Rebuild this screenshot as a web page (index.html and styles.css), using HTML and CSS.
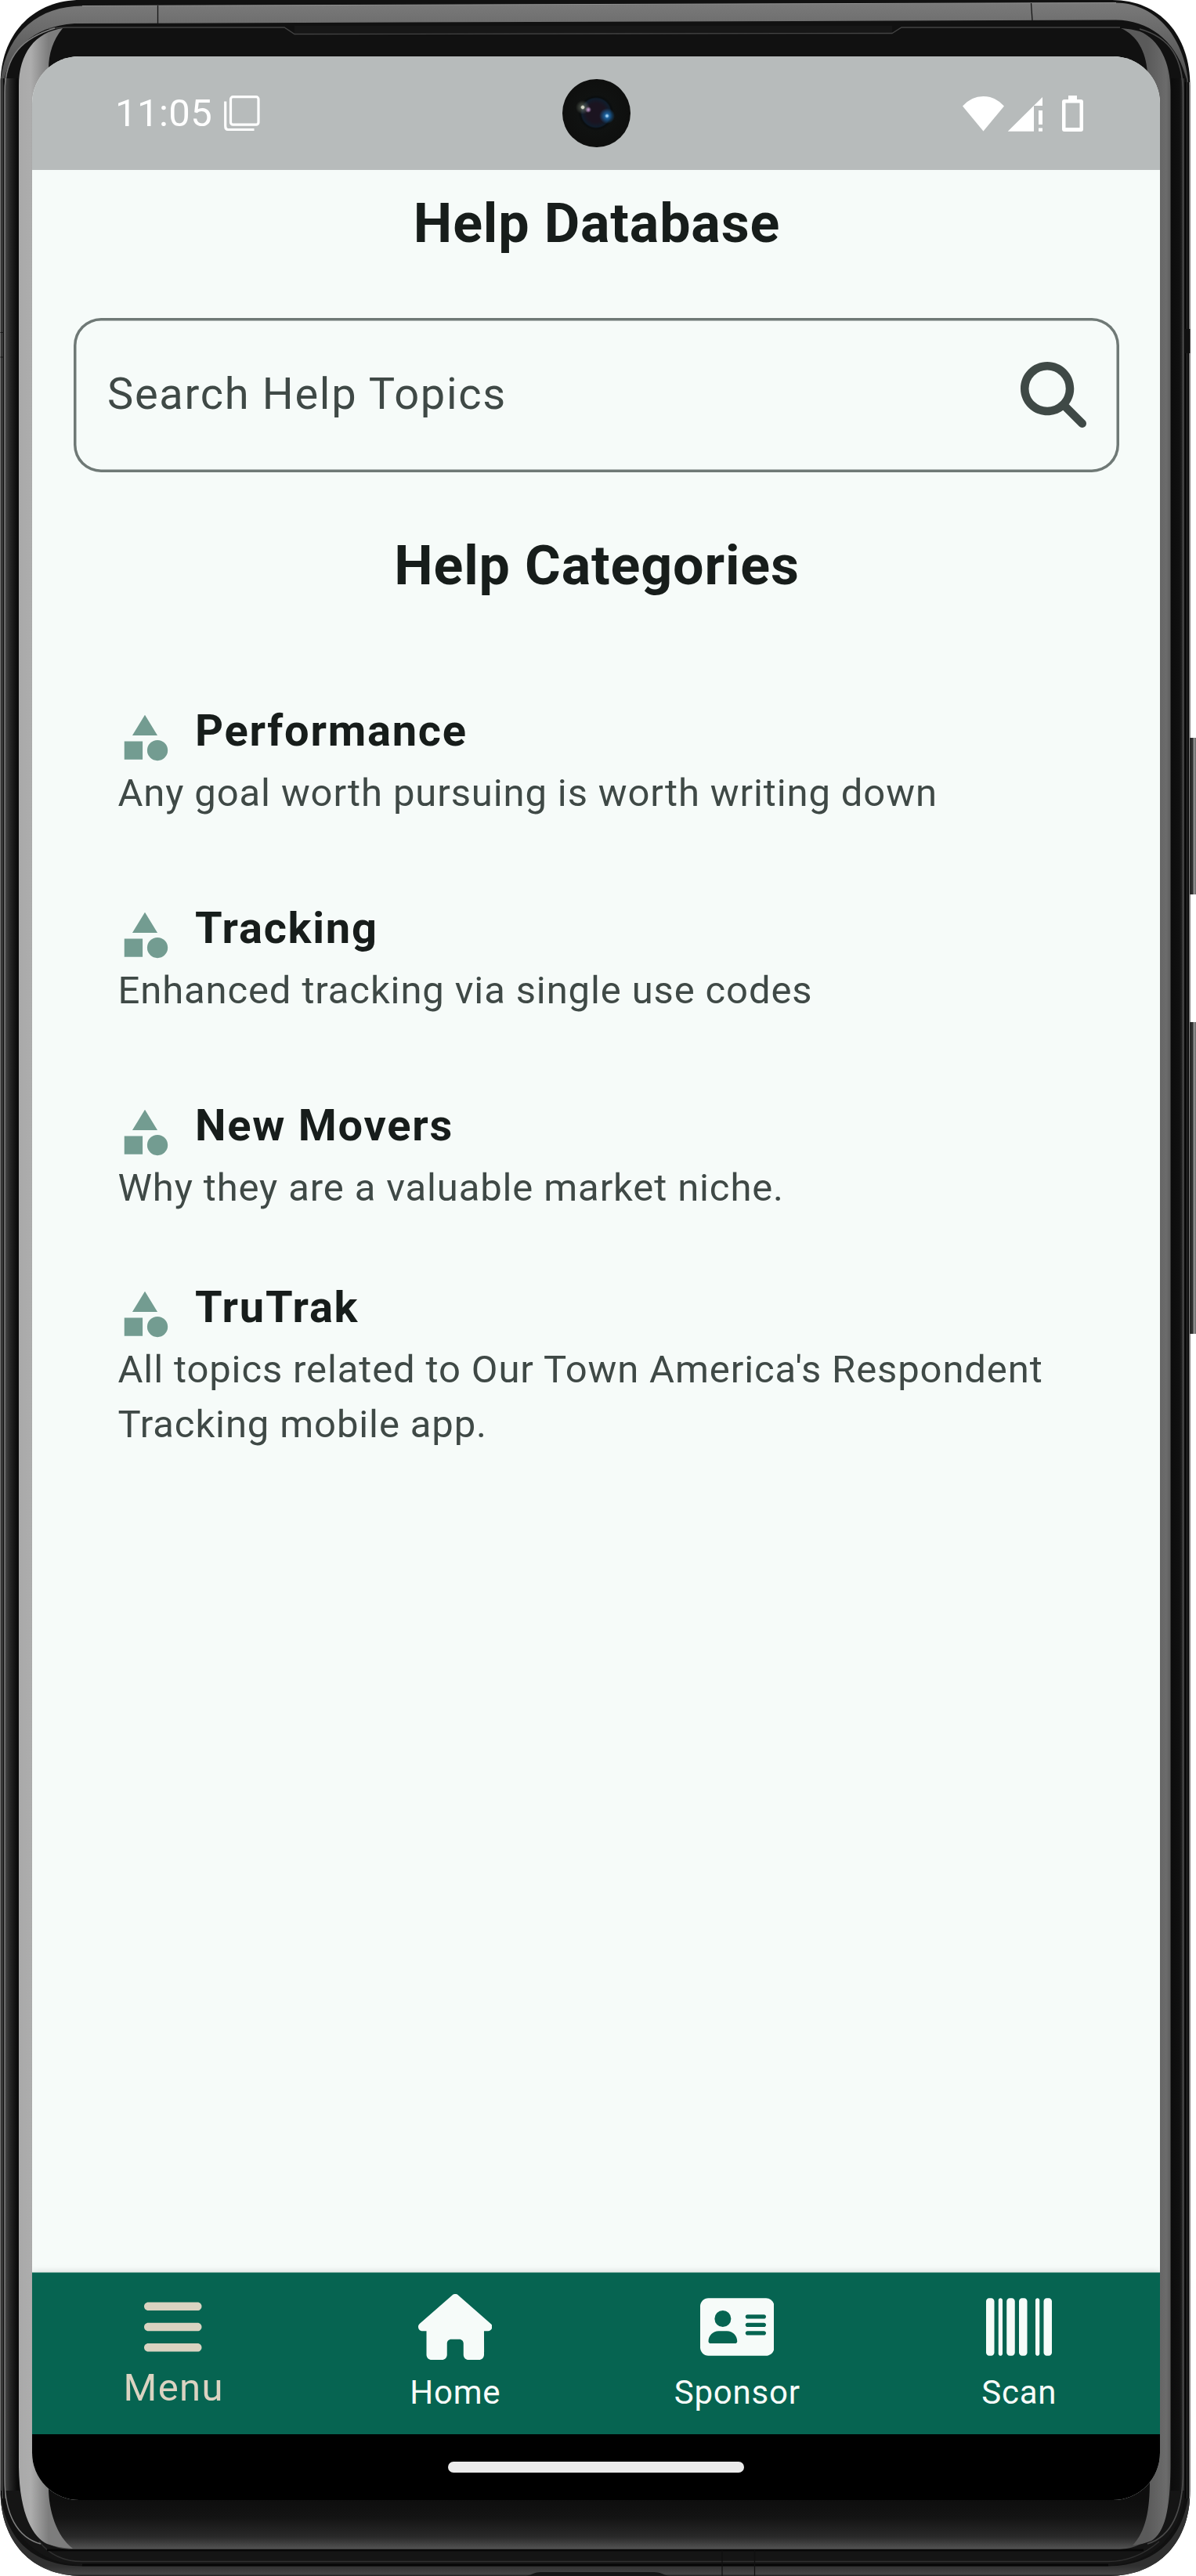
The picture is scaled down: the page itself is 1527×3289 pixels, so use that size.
FILE: index.html
```html
<!DOCTYPE html>
<html lang="en">
<head>
<meta charset="utf-8">
<title>Help Database</title>
<link rel="stylesheet" href="styles.css">
</head>
<body>
<div class="device">
  <svg class="frame" viewBox="0 0 1527 3289" aria-hidden="true">
    <defs>
      <clipPath id="body"><path d="M103 0H1420C1480 0 1519.5 44 1519.5 110V3180C1519.5 3245 1480 3289 1415 3289H105C40 3289 0.500 3245 0.500 3180V103C3 40 45 0 103 0Z"/></clipPath>
      <linearGradient id="topband" x1="0" y1="0" x2="0" y2="1"><stop offset="0" stop-color="#7a7a7a"/><stop offset="1" stop-color="#4a4a4a"/></linearGradient>
      <linearGradient id="chin" x1="0" y1="3192" x2="0" y2="3255" gradientUnits="userSpaceOnUse"><stop offset="0" stop-color="#0e0e0e"/><stop offset=".35" stop-color="#131313"/><stop offset=".75" stop-color="#292929"/><stop offset="1" stop-color="#545454"/></linearGradient>
      <linearGradient id="ledge" x1="7" y1="0" x2="24" y2="0" gradientUnits="userSpaceOnUse"><stop offset="0" stop-color="#444"/><stop offset=".35" stop-color="#252525"/><stop offset=".8" stop-color="#0e0e0e"/><stop offset="1" stop-color="#090909"/></linearGradient>
      <linearGradient id="redge" x1="1495" y1="0" x2="1512" y2="0" gradientUnits="userSpaceOnUse"><stop offset="0" stop-color="#0c0c0c"/><stop offset=".65" stop-color="#101010"/><stop offset="1" stop-color="#333"/></linearGradient>
      <linearGradient id="lglare" x1="24" y1="0" x2="62" y2="0" gradientUnits="userSpaceOnUse"><stop offset="0" stop-color="#a9a9a9"/><stop offset=".4" stop-color="#adadad"/><stop offset="1" stop-color="#7d7d7d"/></linearGradient>
      <linearGradient id="rglare" x1="1465" y1="0" x2="1495" y2="0" gradientUnits="userSpaceOnUse"><stop offset="0" stop-color="#5a5a5a"/><stop offset=".8" stop-color="#6c6c6c"/><stop offset="1" stop-color="#5c5c5c"/></linearGradient>
      <linearGradient id="rim" x1="0" y1="3276" x2="0" y2="3289" gradientUnits="userSpaceOnUse"><stop offset="0" stop-color="#303030"/><stop offset=".8" stop-color="#454545"/><stop offset="1" stop-color="#1c1c1c"/></linearGradient>
      <linearGradient id="key" x1="1518" y1="0" x2="1527" y2="0" gradientUnits="userSpaceOnUse"><stop offset="0" stop-color="#202020"/><stop offset=".5" stop-color="#303030"/><stop offset=".75" stop-color="#999"/><stop offset="1" stop-color="#606060"/></linearGradient>
    </defs>
    <rect x="1516" y="942" width="14" height="200" rx="4" fill="url(#key)"/>
    <rect x="1516" y="1305" width="14" height="398" rx="4" fill="url(#key)"/>
    <g clip-path="url(#body)">
      <rect width="1527" height="3289" fill="#111"/>
      <rect x="6" y="100" width="18" height="3090" fill="url(#ledge)"/>
      <rect x="1495" y="100" width="17" height="3090" fill="url(#redge)"/>
      <!-- bottom edge -->
      <path d="M0 3170C2 3240 40 3276 105 3276.500H1415C1480 3276 1516 3235 1519 3170V3289H0Z" fill="url(#rim)"/>
      <path d="M7 3180C9 3235 50 3275 105 3275H1415C1470 3275 1510 3235 1513 3180Z" fill="#151515"/>
      <path d="M24 3150C25 3215 45 3255 93 3255H1425C1475 3255 1493 3215 1494 3150Z" fill="url(#chin)"/>
      <path d="M50 3245Q70 3270.500 105 3270.500H1415Q1450 3270.500 1480 3245" fill="none" stroke="#303030" stroke-width="1.500"/>
      <path d="M60 3256H1460M105 3275H1415" stroke="#070707" stroke-width="2.500"/>
      <!-- top edge -->
      <path d="M105 7.500L1425 3.500C1470 4 1512 40 1518 110L1513 95C1500 50 1465 26 1425 25.500L95 30C40 34 10 65 4 110L1 100C10 40 50 8 105 7.500Z" fill="url(#topband)"/>
      <path d="M105 7.500L1425 3.500" stroke="#909090" fill="none"/>
      <path d="M201.500 7V30M1316.500 4L1318 26" stroke="#151515" stroke-width="1.300"/>
      <path d="M376 33H1139V42H376Z" fill="#171717"/>
      <path d="M62 36.500L85 35H363L376 43.500L1139 42.500L1151 35H1430" fill="none" stroke="#434343" stroke-width="1.300"/>
      <!-- side rails -->
      <path d="M1 100V3180" stroke="#4c4c4c" stroke-width="2"/>
      <path d="M2.500 100V3190" stroke="#0b0b0b" stroke-width="1"/>
      <path d="M3.500 100V3190" stroke="#555" stroke-width="1.400"/>
      <path d="M4.700 100V3190" stroke="#090909" stroke-width="1.600"/>
      <path d="M70 36C30 48 6 70 6 118V3165C6 3210 22 3240 52 3248" fill="none" stroke="#808080" stroke-width="1.500"/>
      <path d="M1455 37C1495 48 1510.500 75 1510.500 120V3155C1510.500 3205 1497 3238 1465 3248" fill="none" stroke="#4a4a4a" stroke-width="1.700"/>
      <path d="M1514 105V3190" stroke="#080808" stroke-width="3"/>
      <path d="M1515.700 100V3190" stroke="#484848" stroke-width=".8"/>
      <path d="M1517 105V3190" stroke="#0b0b0b" stroke-width="1.800"/>
      <path d="M1518.600 105V3190" stroke="#808080" stroke-width="1.200"/>
      <path d="M0 424.500H5M0 456H5" stroke="#151515"/>
      <rect x="1513" y="420" width="7" height="31" fill="#111"/>
      <!-- glass reflections -->
      <path d="M80 36C45 41 24 68 24 110V3150C25 3212 43 3240 60 3248Q74 3253 93 3254C72 3238 62 3205 62 3176V88Q62 58 80 36Z" fill="url(#lglare)"/>
      <path d="M1431 36Q1445 37 1455 40C1480 50 1494.500 80 1494.500 115V3150C1494 3205 1487 3234 1470 3244Q1458 3249 1446 3250C1463 3232 1468 3205 1468 3167L1465 92C1463 66 1452 45 1431 36Z" fill="url(#rglare)"/>
      <path d="M922 3256V3289M963.500 3256V3289" stroke="#101010" stroke-width="1.200"/>
      <path d="M672 3289C680 3287 683 3284 690 3284H835C843 3284 846 3287 854 3289Z" fill="#151515"/>
    </g>
  </svg>

  <div class="screen">
    <div class="status">
      <span class="clock">11:05</span>
      <svg class="notice" viewBox="0 0 46 46"><path d="M1.700 7.500V39Q1.700 43.500 5 43.500H38.500" fill="none" stroke="#fff" stroke-width="3.200"/><rect x="8.500" y="1.700" width="35.500" height="35.500" rx="3" fill="none" stroke="#fff" stroke-width="3.200"/></svg>
      <span class="camera"></span>
      <svg class="signals" viewBox="0 0 154 46" fill="#fff">
        <path d="M0 13.500Q11 1 26.500 1T53 13.500L26.500 45.500Z"/>
        <path d="M102 2V13H91V45.700H57.700ZM97 19h5v18h-5zM97 41.500h5v4.200h-5z"/>
        <path fill-rule="evenodd" d="M135 0h11v5h5q3 0 3 3v35q0 3-3 3h-21q-3 0-3-3V8q0-3 3-3h5zM131.500 9.500V41h18V9.500z"/>
      </svg>
    </div>

    <main class="content">
      <h1 class="heading">Help Database</h1>
      <div class="search">
        <span class="search-label">Search Help Topics</span>
        <svg class="search-icon" viewBox="0 0 512 512"><path d="M416 208c0 45.900-14.900 88.300-40 122.700L502.600 457.400c12.500 12.500 12.500 32.800 0 45.300s-32.800 12.500-45.300 0L330.700 376c-34.400 25.200-76.800 40-122.700 40C93.100 416 0 322.900 0 208S93.100 0 208 0S416 93.100 416 208zM208 352a144 144 0 1 0 0-288 144 144 0 1 0 0 288z"/></svg>
      </div>
      <h2 class="heading">Help Categories</h2>
      <div class="list">
        <article class="row">
          <div class="row-head"><svg class="shapes" viewBox="0 0 24 24"><path d="M12 2L6.500 11h11zM3 13.500h8v8H3z"/><circle cx="17.500" cy="17.500" r="4.500"/></svg><h3>Performance</h3></div>
          <p>Any goal worth pursuing is worth writing down</p>
        </article>
        <article class="row">
          <div class="row-head"><svg class="shapes" viewBox="0 0 24 24"><path d="M12 2L6.500 11h11zM3 13.500h8v8H3z"/><circle cx="17.500" cy="17.500" r="4.500"/></svg><h3>Tracking</h3></div>
          <p>Enhanced tracking via single use codes</p>
        </article>
        <article class="row">
          <div class="row-head"><svg class="shapes" viewBox="0 0 24 24"><path d="M12 2L6.500 11h11zM3 13.500h8v8H3z"/><circle cx="17.500" cy="17.500" r="4.500"/></svg><h3>New Movers</h3></div>
          <p>Why they are a valuable market niche.</p>
        </article>
        <article class="row">
          <div class="row-head"><svg class="shapes" viewBox="0 0 24 24"><path d="M12 2L6.500 11h11zM3 13.500h8v8H3z"/><circle cx="17.500" cy="17.500" r="4.500"/></svg><h3>TruTrak</h3></div>
          <p>All topics related to Our Town America's Respondent Tracking mobile app.</p>
        </article>
      </div>
    </main>

    <nav class="tabs">
      <a class="tab active"><svg viewBox="0 0 448 512"><path d="M0 96C0 78.300 14.300 64 32 64H416c17.700 0 32 14.300 32 32s-14.300 32-32 32H32C14.300 128 0 113.700 0 96zM0 256c0-17.700 14.300-32 32-32H416c17.700 0 32 14.300 32 32s-14.300 32-32 32H32c-17.700 0-32-14.300-32-32zM448 416c0 17.700-14.300 32-32 32H32c-17.700 0-32-14.300-32-32s14.300-32 32-32H416c17.700 0 32 14.300 32 32z"/></svg><span>Menu</span></a>
      <a class="tab"><svg viewBox="0 0 576 512"><path d="M575.800 255.500c0 18-15 32.100-32 32.100h-32l.7 160.200c0 2.700-.2 5.400-.5 8.100V472c0 22.100-17.900 40-40 40H456c-1.100 0-2.200 0-3.300-.1c-1.400 .1-2.800 .1-4.200 .1H416 392c-22.100 0-40-17.900-40-40V448 384c0-17.700-14.300-32-32-32H256c-17.700 0-32 14.300-32 32v64 24c0 22.100-17.900 40-40 40H160 128.100c-1.500 0-3-.1-4.500-.2c-1.200 .1-2.400 .2-3.600 .2H104c-22.100 0-40-17.900-40-40V360c0-.9 0-1.900 .1-2.800V287.600H32c-18 0-32-14-32-32.100c0-9 3-17 10-24L266.400 8c7-7 15-8 22-8s15 2 21 7L564.800 231.500c8 7 12 15 11 24z"/></svg><span>Home</span></a>
      <a class="tab"><svg viewBox="0 0 576 512"><path d="M64 32C28.700 32 0 60.700 0 96V416c0 35.300 28.700 64 64 64H512c35.300 0 64-28.700 64-64V96c0-35.300-28.700-64-64-64H64zm80 256h64c44.200 0 80 35.800 80 80c0 8.800-7.200 16-16 16H80c-8.800 0-16-7.200-16-16c0-44.200 35.800-80 80-80zm-32-96a64 64 0 1 1 128 0 64 64 0 1 1 -128 0zm256-32H496c8.800 0 16 7.200 16 16s-7.200 16-16 16H368c-8.800 0-16-7.200-16-16s7.200-16 16-16zm0 64H496c8.800 0 16 7.200 16 16s-7.200 16-16 16H368c-8.800 0-16-7.200-16-16s7.200-16 16-16zm0 64H496c8.800 0 16 7.200 16 16s-7.200 16-16 16H368c-8.800 0-16-7.200-16-16s7.200-16 16-16z"/></svg><span>Sponsor</span></a>
      <a class="tab"><svg viewBox="0 0 512 512"><path d="M24 32C10.700 32 0 42.700 0 56V456c0 13.300 10.700 24 24 24H40c13.300 0 24-10.700 24-24V56c0-13.300-10.700-24-24-24H24zm88 0c-8.800 0-16 7.200-16 16V464c0 8.800 7.200 16 16 16s16-7.200 16-16V48c0-8.800-7.200-16-16-16zm72 0c-13.300 0-24 10.700-24 24V456c0 13.300 10.700 24 24 24h16c13.300 0 24-10.700 24-24V56c0-13.300-10.700-24-24-24H184zm96 0c-13.300 0-24 10.700-24 24V456c0 13.300 10.700 24 24 24h16c13.300 0 24-10.700 24-24V56c0-13.300-10.700-24-24-24H280zM448 56V456c0 13.300 10.700 24 24 24h16c13.300 0 24-10.700 24-24V56c0-13.300-10.700-24-24-24H472c-13.300 0-24 10.700-24 24zm-64-8V464c0 8.800 7.200 16 16 16s16-7.200 16-16V48c0-8.800-7.200-16-16-16s-16 7.200-16 16z"/></svg><span>Scan</span></a>
    </nav>
    <div class="gesture"><span></span></div>
  </div>
</div>
</body>
</html>
```
FILE: styles.css
```css
* { box-sizing: border-box; }
html, body, h1, h2, h3, p { margin: 0; }
body { background: #fff; font-family: Roboto, sans-serif; color: #171d1b; }
svg { display: block; flex: none; }

.device {
  position: relative;
  width: 1527px;
  height: 3289px;
  padding: 72px 46px 97px 41px;
  overflow: hidden;
}
.frame { position: absolute; left: 0; top: 0; width: 1527px; height: 3289px; }

.screen {
  position: relative;
  display: flex;
  flex-direction: column;
  width: 1440px;
  height: 3120px;
  border-radius: 60px;
  overflow: hidden;
  background: #f6fbf9;
}

.status {
  position: relative;
  display: flex;
  align-items: center;
  height: 145px;
  flex: none;
  padding: 0 98px 0 106px;
  background: #b7bbbb;
  color: #fff;
}
.clock { font-size: 49px; line-height: 70px; letter-spacing: .45px; }
.notice { width: 46px; height: 46px; margin-left: 15px; }
.camera {
  position: absolute;
  left: 677px;
  top: 29px;
  width: 87px;
  height: 87px;
  border-radius: 50%;
  background:
    radial-gradient(circle at 26px 36px, #d5d8c8 0 1.500px, rgba(120, 130, 115, .5) 3px, transparent 9px),
    radial-gradient(circle at 33px 39px, #b58bc0 0 1px, transparent 4px),
    radial-gradient(circle at 57px 47px, #9fd0f5 0 1px, #1c5f9a 3px, transparent 10px),
    radial-gradient(circle at 43px 43px, #1b1420 0 12px, #101d2c 18px, #0a0d0e 20px, #101211 23px, #0e0f0e 43px);
}
.signals { width: 154px; height: 46px; margin-left: auto; }

.content { flex: 1; padding: 19px 52.5px 0; }
.heading {
  padding-left: 2px;
  font-size: 70px;
  line-height: 98px;
  font-weight: 700;
  letter-spacing: .85px;
  text-align: center;
}
.search {
  display: flex;
  align-items: center;
  justify-content: space-between;
  height: 196.5px;
  margin: 72px 0 70.5px;
  padding: 0 42px 0 43.5px;
  border-radius: 35px;
  box-shadow: inset 0 0 0 3.5px #6f7976;
  color: #3f4946;
}
.search-label { padding-bottom: 2px; font-size: 56px; line-height: 84px; letter-spacing: 1.7px; }
.search-icon { width: 84px; height: 84px; fill: #3f4946; }

.list { margin-top: 72px; }
.row {
  display: flex;
  flex-direction: column;
  justify-content: center;
  min-height: 252px;
  padding: 28px 55px 28px 56.5px;
}
.row-head { display: flex; gap: 29px; height: 87px; margin-bottom: 0; }
.shapes { width: 70px; height: 70px; margin-top: 16px; fill: #739c91; }
.row h3 { font-size: 56px; line-height: 84px; font-weight: 700; letter-spacing: 1.75px; }
.row p { margin-bottom: -1px; padding-left: .5px; font-size: 49px; line-height: 70px; letter-spacing: .875px; color: #3f4946; }

.tabs {
  display: flex;
  height: 207px;
  flex: none;
  border-top: 1px solid #74a99c;
  background: #066451;
  box-shadow: 0 -1px 8px rgba(0, 0, 0, .12);
}
.tab {
  display: flex;
  flex: 1;
  flex-direction: column;
  align-items: center;
  padding-top: 27px;
  color: #f6fbf9;
  font-size: 42px;
  line-height: 83px;
  letter-spacing: .8px;
}
.tab span { padding-left: .5px; }
.tab svg { height: 84px; fill: currentColor; }
.active { color: #dad3c1; font-size: 49px; line-height: 71px; letter-spacing: 1.4px; }
.active span { padding-left: 1.5px; }

.gesture {
  display: flex;
  align-items: center;
  justify-content: center;
  height: 84px;
  flex: none;
  background: #000;
}
.gesture span { width: 378px; height: 14px; border-radius: 7px; background: #ebebeb; }
```
